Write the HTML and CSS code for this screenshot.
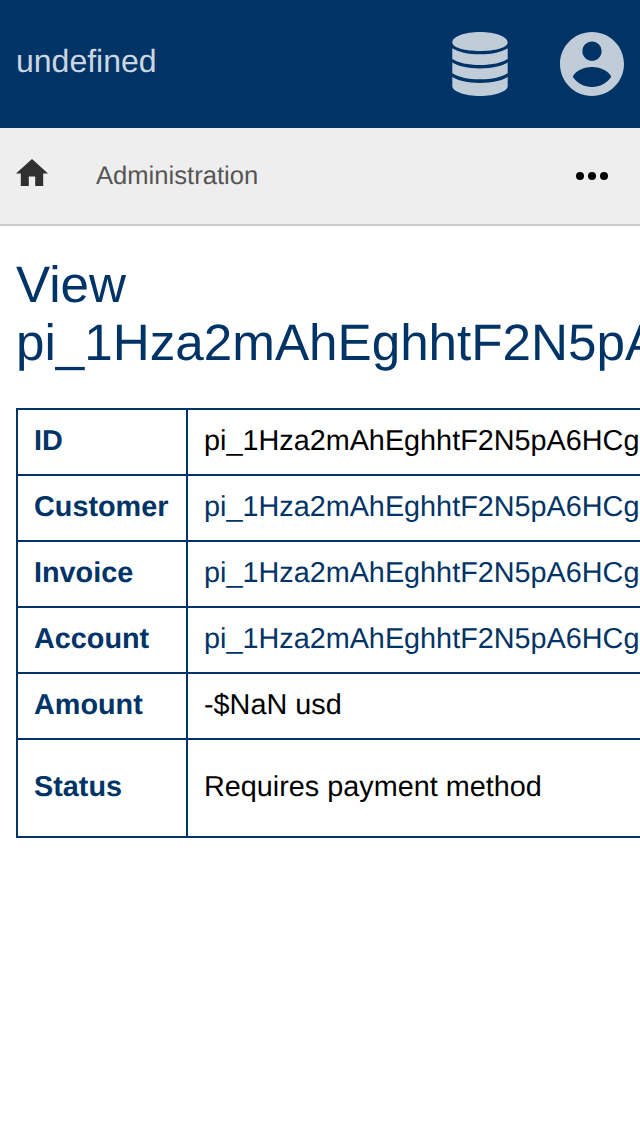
FILE: index.html
```html
<!DOCTYPE html>
<html lang="en">
<head>
<meta charset="utf-8">
<title>Administration</title>
<link rel="stylesheet" href="styles.css">
</head>
<body>
<header class="header">
  <span class="brand">undefined</span>
  <nav class="header-actions">
    <svg class="icon-database" viewBox="0 0 56 64"><path d="M28 0C43 0 55.700 4.500 55.700 10.500C55.700 15.500 43 19 28 19S.3 15.500.3 10.500C.3 4.500 13 0 28 0zM.3 16.200C6 20 16 22.300 28 22.300S50 20 55.700 16.200V27C50 30.800 40 33 28 33S6 30.800.3 27zM.3 30.600C6 34.200 16 36.500 28 36.500S50 34.200 55.700 30.600V41.200C50 45 40 47.300 28 47.300S6 45 .3 41.200zM.3 45C6 48.600 16 50.900 28 50.900S50 48.600 55.700 45V54C55.700 59.500 43 64 28 64S.3 59.500.3 54z"/></svg>
    <svg class="icon-account" viewBox="2 2 20 20"><path d="M12 2C6.480 2 2 6.480 2 12s4.480 10 10 10 10-4.480 10-10S17.520 2 12 2zm0 3c1.660 0 3 1.340 3 3s-1.340 3-3 3-3-1.340-3-3 1.340-3 3-3zm0 14.200c-2.500 0-4.710-1.280-6-3.220.500-1.600 3.200-3.080 6-3.080s5.500 1.480 6 3.080c-1.290 1.940-3.500 3.220-6 3.220z"/></svg>
  </nav>
</header>
<nav class="breadcrumbs">
  <svg class="icon-home" viewBox="2 3 20 17"><path d="M10 20v-6h4v6h5v-8h3L12 3 2 12h3v8z"/></svg>
  <span class="crumb">Administration</span>
  <svg class="icon-more" viewBox="0 0 32 8"><circle cx="4" cy="4" r="4"/><circle cx="16" cy="4" r="4"/><circle cx="28" cy="4" r="4"/></svg>
</nav>
<main class="content">
  <h1 class="title">View pi_1Hza2mAhEghhtF2N5pA6HCg</h1>
  <table class="details">
    <tr><th>ID</th><td>pi_1Hza2mAhEghhtF2N5pA6HCg</td></tr>
    <tr><th>Customer</th><td><a>pi_1Hza2mAhEghhtF2N5pA6HCg</a></td></tr>
    <tr><th>Invoice</th><td><a>pi_1Hza2mAhEghhtF2N5pA6HCg</a></td></tr>
    <tr><th>Account</th><td><a>pi_1Hza2mAhEghhtF2N5pA6HCg</a></td></tr>
    <tr><th>Amount</th><td>-$NaN usd</td></tr>
    <tr class="status-row"><th>Status</th><td>Requires payment method</td></tr>
  </table>
</main>
</body>
</html>
```
FILE: styles.css
```css
* { box-sizing: border-box; }
body { margin: 0; height: 1136px; overflow: hidden; background: #fff; color: #000; font-family: "Liberation Sans", Arial, sans-serif; text-rendering: geometricPrecision; }
.header { height: 128px; padding: 0 16px; display: flex; align-items: center; justify-content: space-between; background: #036; color: #ccd6e0; }
.brand { font-size: 32px; line-height: 38px; margin-bottom: 6px; }
.header-actions { display: flex; align-items: center; gap: 52px; fill: #c1ccd9; }
.icon-database { width: 56px; height: 64px; }
.icon-account { width: 64px; height: 64px; }
.breadcrumbs { height: 98px; padding: 0 32px 0 16px; display: flex; align-items: center; background: #eee; border-bottom: 2px solid #ccc; }
.icon-home { width: 32px; height: 27.2px; margin: 0 48px 7.4px 0; fill: #303030; }
.crumb { flex: 1; font-size: 25.6px; line-height: 30px; color: #555; }
.icon-more { width: 32px; height: 8px; }
.content { padding: 30px 16px; overflow: hidden; }
.title { margin: 0 0 36px; font-size: 51.2px; font-weight: 400; line-height: 58px; color: #036; }
.details { width: 720px; border-collapse: collapse; font-size: 28.8px; line-height: 32px; }
.details th, .details td { height: 66px; padding: 0 16px 3px; border: 2px solid #036; text-align: left; white-space: nowrap; }
.details th { width: 170px; color: #036; }
.details a { color: #036; }
.details .status-row > * { height: 98px; }
```
